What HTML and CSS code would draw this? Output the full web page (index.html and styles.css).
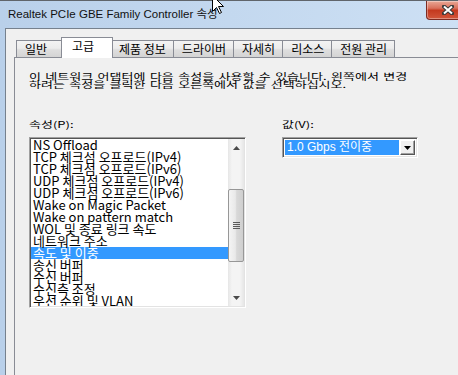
FILE: index.html
```html
<!DOCTYPE html>
<html>
<head>
    <meta charset="utf-8">
    <title>Realtek PCIe GBE Family Controller 속성</title>
    <link rel="stylesheet" href="styles.css">
</head>
<body>
    <div class="window">
        <div class="titlebar">
            <span class="title">Realtek PCIe GBE Family Controller 속성</span>
            <div class="close">
                <svg width="12" height="10" viewBox="0 0 12 10"><path d="M2 1.5L10 8.5M10 1.5L2 8.5" stroke="#3a3a3a" stroke-width="4" stroke-linecap="square"/><path d="M2 1.5L10 8.5M10 1.5L2 8.5" stroke="#fff" stroke-width="2"/></svg>
            </div>
        </div>

        <div class="client">
            <div class="tabs">
                <div class="tab">일반</div>
                <div class="tab active">고급</div>
                <div class="tab">제품 정보</div>
                <div class="tab">드라이버</div>
                <div class="tab">자세히</div>
                <div class="tab">리소스</div>
                <div class="tab">전원 관리</div>
            </div>

            <div class="panel">
                <p class="intro squash">이 네트워크 어댑터에 다음 속성을 사용할 수 있습니다. 왼쪽에서 변경<br>하려는 속성을 클릭한 다음 오른쪽에서 값을 선택하십시오.</p>

                <div class="fields">
                    <div class="field">
                        <label class="squash">속성(P):</label>
                        <div class="listbox">
                            <ul class="items">
                                <li>NS Offload</li>
                                <li>TCP 체크섬 오프로드(IPv4)</li>
                                <li>TCP 체크섬 오프로드(IPv6)</li>
                                <li>UDP 체크섬 오프로드(IPv4)</li>
                                <li>UDP 체크섬 오프로드(IPv6)</li>
                                <li>Wake on Magic Packet</li>
                                <li>Wake on pattern match</li>
                                <li>WOL 및 종료 링크 속도</li>
                                <li>네트워크 주소</li>
                                <li class="selected">속도 및 이중</li>
                                <li>송신 버퍼</li>
                                <li>수신 버퍼</li>
                                <li>수신측 조정</li>
                                <li>우선 순위 및 VLAN</li>
                            </ul>
                            <div class="scrollbar">
                                <div class="sb-btn"><svg width="7" height="4" viewBox="0 0 7 4"><path d="M3.5 0L7 4H0Z" fill="#4a4a4a"/></svg></div>
                                <div class="sb-track">
                                    <div class="thumb">
                                        <svg width="7" height="7" viewBox="0 0 7 7"><path d="M0 0.5H7M0 2.5H7M0 4.5H7M0 6.5H7" stroke="#5b5b5b"/></svg>
                                    </div>
                                </div>
                                <div class="sb-btn"><svg width="7" height="4" viewBox="0 0 7 4"><path d="M0 0H7L3.5 4Z" fill="#4a4a4a"/></svg></div>
                            </div>
                        </div>
                    </div>

                    <div class="field">
                        <label class="squash">값(V):</label>
                        <div class="combo">
                            <span class="combo-text">1.0 Gbps 전이중</span>
                            <span class="combo-btn"><svg width="7" height="4" viewBox="0 0 7 4"><path d="M0 0H7L3.5 4Z" fill="#000"/></svg></span>
                        </div>
                    </div>
                </div>
            </div>
        </div>

        <svg class="cursor" width="13" height="20" viewBox="0 0 13 20"><path d="M0.5 0.5V16.5L4.5 12.5L7.5 18.5L9.5 17.5L6.5 11.5H11.5Z" fill="#fff" stroke="#000"/></svg>
    </div>
</body>
</html>
```

FILE: styles.css
```css
html, body {
    height: 100%;
    margin: 0;
    overflow: hidden;
}

body {
    background: linear-gradient(90deg, #b9d0ea, #cde0f4);
    font-family: "Liberation Sans", "Noto Sans CJK KR", sans-serif;
    font-size: 12px;
    color: #000;
}

.window {
    height: 100%;
    box-sizing: border-box;
    border-top: 1px solid #60656b;
    display: flex;
    flex-direction: column;
    position: relative;
}

.titlebar {
    height: 27px;
    display: flex;
    align-items: flex-start;
    flex-shrink: 0;
}

.title {
    font-family: "Liberation Sans", "Noto Sans CJK KR", sans-serif;
    font-size: 11.5px;
    line-height: 16px;
    padding: 5px 0 0 8px;
    white-space: nowrap;
    color: #111;
}

.close {
    margin-left: auto;
    margin-right: -13px;
    width: 45px;
    height: 19px;
    box-sizing: border-box;
    border: 1px solid #7d2b22;
    border-top: 0;
    border-radius: 0 0 4px 4px;
    background: linear-gradient(#e9a896, #d9705c 40%, #c4391f 52%, #d2563b);
    box-shadow: inset 0 0 0 1px rgba(255, 255, 255, 0.35);
    display: flex;
    align-items: center;
    justify-content: center;
    padding-right: 2px;
}

.client {
    flex: 1;
    margin-left: 5px;
    border-left: 1px solid #76818e;
    border-top: 1px solid #76818e;
    background: #f0f0f0;
    display: flex;
    flex-direction: column;
}

.tabs {
    display: flex;
    align-items: flex-end;
    height: 20px;
    margin: 8px 0 0 10px;
    position: relative;
    z-index: 1;
}

.tab {
    box-sizing: border-box;
    height: 17px;
    min-width: 48px;
    padding: 0 7px 0 8px;
    border: 1px solid #898c95;
    border-bottom: 0;
    background: linear-gradient(#f3f3f3, #ececec 45%, #dedede 55%, #d4d4d4);
    font-family: "Noto Sans CJK KR", sans-serif;
    line-height: 15px;
    white-space: nowrap;
}

.tab + .tab {
    margin-left: -1px;
}

.tab.active {
    height: 21px;
    min-width: 52px;
    margin: 0 -2px -1px -3px;
    padding: 0 9px 0 10px;
    background: #fff;
    position: relative;
    z-index: 1;
}

.panel {
    flex: 1;
    margin-left: 8px;
    border-left: 1px solid #898c95;
    border-top: 1px solid #898c95;
    padding: 14px 0 0 14px;
}

.squash {
    transform: scaleY(0.7);
    transform-origin: 0 0;
}

.intro {
    margin: 0;
    height: 22px;
    font-family: "Noto Sans CJK KR", sans-serif;
    font-size: 13px;
    line-height: 11.5px;
    word-spacing: 1.5px;
    white-space: nowrap;
}

.fields {
    display: grid;
    grid-template-columns: 217px 136px;
    column-gap: 36px;
    margin-top: 26px;
}

.field label {
    display: block;
    font-family: "Noto Sans CJK KR", sans-serif;
    font-size: 13px;
    line-height: 11px;
    margin-bottom: 6px;
}

.listbox {
    height: 171px;
    box-sizing: border-box;
    border: 1px solid;
    border-color: #a0a0a0 #fff #fff #a0a0a0;
    box-shadow: inset 1px 1px #555, inset -1px -1px #e3e3e3;
    padding: 1px;
    background: #fff;
    display: flex;
}

.items {
    flex: 1;
    list-style: none;
    margin: 0;
    padding: 0;
    overflow: hidden;
    font-family: "Noto Sans CJK KR", sans-serif;
    font-size: 13px;
}

.items li {
    height: 12px;
    line-height: 12px;
    padding-left: 2px;
    white-space: nowrap;
}

.items li.selected {
    background: #3399ff;
    color: #fff;
}

.scrollbar {
    width: 16px;
    display: flex;
    flex-direction: column;
    background: linear-gradient(90deg, #e6e6e6, #f4f4f4 25%, #f4f4f4 75%, #e6e6e6);
}

.sb-btn {
    height: 17px;
    display: flex;
    align-items: center;
    justify-content: center;
}

.sb-track {
    flex: 1;
    padding-top: 33px;
}

.thumb {
    height: 73px;
    box-sizing: border-box;
    border: 1px solid #979797;
    border-radius: 2px;
    background: linear-gradient(90deg, #f4f4f4, #e9e9e9 45%, #d8d8d8 55%, #cfcfcf);
    display: flex;
    align-items: center;
    justify-content: center;
}

.combo {
    height: 21px;
    box-sizing: border-box;
    border: 1px solid;
    border-color: #a0a0a0 #fff #fff #a0a0a0;
    box-shadow: inset 1px 1px #555, inset -1px -1px #e3e3e3;
    padding: 2px;
    background: #fff;
    display: flex;
    gap: 1px;
}

.combo-text {
    flex: 1;
    background: #3399ff;
    color: #fff;
    line-height: 15px;
    padding-left: 2px;
    white-space: nowrap;
}

.combo-btn {
    width: 15px;
    box-sizing: border-box;
    background: #f0f0f0;
    border: 1px solid;
    border-color: #fff #555 #555 #fff;
    box-shadow: inset -1px -1px #a0a0a0;
    display: flex;
    align-items: center;
    justify-content: center;
}

.cursor {
    position: absolute;
    left: 212px;
    top: -6px;
}
```
